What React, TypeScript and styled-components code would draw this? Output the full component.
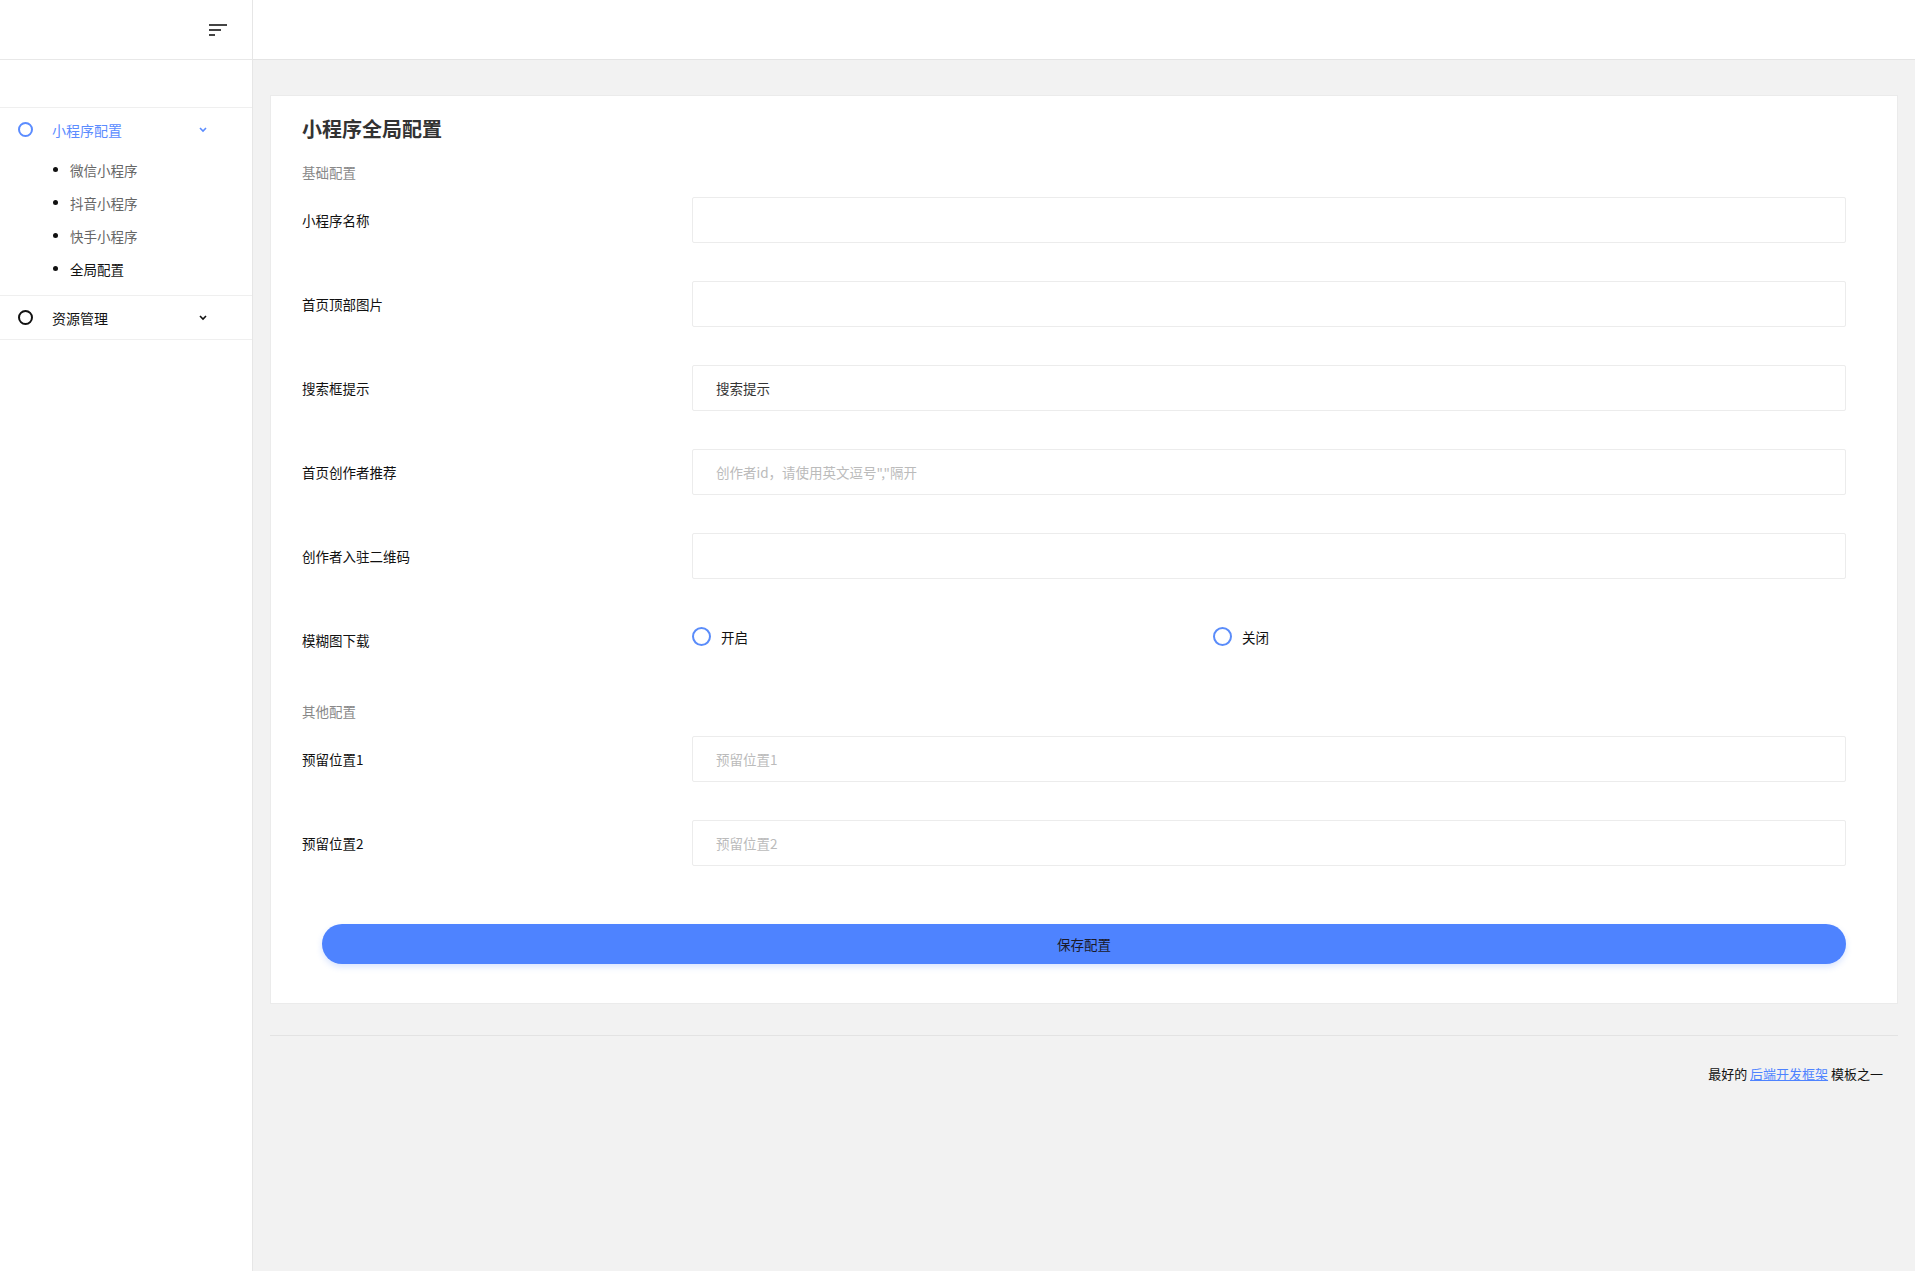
import React from 'react'
import styled, { createGlobalStyle } from 'styled-components'

const GlobalStyle = createGlobalStyle`
    html, body {
        margin: 0;
        padding: 0;
        background: #f2f2f2;
        font-family: "Noto Sans CJK SC", "Noto Sans", "Liberation Sans", sans-serif;
        color: #222;
    }
    * { box-sizing: border-box; }
`

const Page = styled.div`
    display: flex;
    min-height: 100vh;
`

// ---- sidebar ----
const Sidebar = styled.aside`
    width: 253px;
    flex-shrink: 0;
    background: #fff;
    border-right: 1px solid #e6e6e6;
`
const SideTop = styled.div`
    height: 60px;
    display: flex;
    align-items: center;
    justify-content: flex-end;
    padding-right: 25px;
    border-bottom: 1px solid #e8e8e8;
`
const SideSpacer = styled.div`
    height: 48px;
    border-bottom: 1px solid #efefef;
`
const MenuGroup = styled.div`
    border-bottom: 1px solid #efefef;
`
const MenuHead = styled.div<{ $active?: boolean }>`
    height: 43px;
    display: flex;
    align-items: center;
    padding: 0 44px 0 18px;
    font-size: 14px;
    color: ${(p) => (p.$active ? '#5b8cff' : '#111')};
    cursor: pointer;
`
const MenuCircle = styled.span<{ $active?: boolean }>`
    width: 15px;
    height: 15px;
    border-radius: 50%;
    border: 2px solid ${(p) => (p.$active ? '#5b8cff' : '#111')};
    margin-right: 19px;
`
const MenuTitle = styled.span`
    flex: 1;
`
const SubMenu = styled.ul`
    list-style: none;
    margin: 0;
    padding: 2px 0 10px;
`
const SubItem = styled.li<{ $current?: boolean }>`
    height: 33px;
    display: flex;
    align-items: center;
    padding-left: 53px;
    font-size: 13.5px;
    color: ${(p) => (p.$current ? '#111' : '#666')};
    &::before {
        content: '';
        width: 5px;
        height: 5px;
        border-radius: 50%;
        background: #111;
        margin-right: 12px;
    }
`

const Chevron = ({ color }: { color: string }) => (
    <svg width='10' height='7' viewBox='0 0 10 7'>
        <path d='M2 2 L5 5 L8 2' fill='none' stroke={color} strokeWidth='1.6' />
    </svg>
)

const MenuIcon = () => (
    <svg width='18' height='14' viewBox='0 0 18 14'>
        <rect x='0' y='1' width='18' height='2' fill='#444' />
        <rect x='0' y='6' width='12' height='2' fill='#444' />
        <rect x='0' y='11' width='6' height='2' fill='#444' />
    </svg>
)

// ---- main ----
const Main = styled.main`
    flex: 1;
    display: flex;
    flex-direction: column;
`
const TopBar = styled.header`
    height: 60px;
    background: #fff;
    border-bottom: 1px solid #e4e4e4;
`
const Content = styled.div`
    padding: 35px 17px 0;
`
const Card = styled.section`
    background: #fff;
    border: 1px solid #ebebeb;
    padding: 19px 51px 39px 31px;
`
const Title = styled.h1`
    margin: 0;
    font-size: 20px;
    line-height: 28px;
    font-weight: 700;
    color: #333;
`
const Section = styled.div<{ $first?: boolean }>`
    font-size: 13.5px;
    line-height: 20px;
    color: #888;
    margin: ${(p) => (p.$first ? '19px' : '0')} 0 15px;
`
const Row = styled.div`
    display: flex;
    align-items: center;
    height: 46px;
    margin-bottom: 38px;
`
const Label = styled.label`
    width: 390px;
    flex-shrink: 0;
    font-size: 13.5px;
    color: #111;
`
const Input = styled.input`
    flex: 1;
    height: 46px;
    border: 1px solid #ececec;
    border-radius: 2px;
    padding: 0 23px;
    font-family: inherit;
    font-size: 13.5px;
    color: #333;
    outline: none;
    &::placeholder {
        color: #bbb;
    }
`
const RadioGroup = styled.div`
    flex: 1;
    display: flex;
    margin-top: -7px;
`
const RadioOption = styled.label`
    width: 521px;
    display: flex;
    align-items: center;
    font-size: 13.5px;
    color: #111;
    cursor: pointer;
`
const RadioCircle = styled.span`
    width: 19px;
    height: 19px;
    border-radius: 50%;
    border: 2px solid #5a8cfa;
    margin-right: 10px;
`
const SaveButton = styled.button`
    display: block;
    width: calc(100% - 20px);
    margin: 58px 0 0 20px;
    height: 40px;
    border: none;
    border-radius: 20px;
    background: #4e83ff;
    color: #1a1a2a;
    font-family: inherit;
    font-size: 13.5px;
    box-shadow: 0 3px 6px rgba(78, 131, 255, 0.22);
    cursor: pointer;
`
const Footer = styled.footer`
    margin: 31px 17px 0;
    border-top: 1px solid #e3e3e3;
    padding: 28px 15px 0 0;
    text-align: right;
    font-size: 13px;
    line-height: 20px;
    color: #111;
    a {
        color: #4e83ff;
        text-decoration: underline;
    }
`

type Field = { label: string; value?: string; placeholder?: string }

const basicFields: Field[] = [
    { label: '小程序名称' },
    { label: '首页顶部图片' },
    { label: '搜索框提示', value: '搜索提示' },
    { label: '首页创作者推荐', placeholder: '创作者id，请使用英文逗号","隔开' },
    { label: '创作者入驻二维码' },
]

const otherFields: Field[] = [
    { label: '预留位置1', placeholder: '预留位置1' },
    { label: '预留位置2', placeholder: '预留位置2' },
]

const FormRow = ({ field }: { field: Field }) => (
    <Row>
        <Label>{field.label}</Label>
        <Input defaultValue={field.value} placeholder={field.placeholder} />
    </Row>
)

export default function App() {
    return (
        <Page>
            <GlobalStyle />
            <Sidebar>
                <SideTop>
                    <MenuIcon />
                </SideTop>
                <SideSpacer />
                <MenuGroup>
                    <MenuHead $active>
                        <MenuCircle $active />
                        <MenuTitle>小程序配置</MenuTitle>
                        <Chevron color='#5b8cff' />
                    </MenuHead>
                    <SubMenu>
                        {['微信小程序', '抖音小程序', '快手小程序'].map((item) => (
                            <SubItem key={item}>{item}</SubItem>
                        ))}
                        <SubItem $current>全局配置</SubItem>
                    </SubMenu>
                </MenuGroup>
                <MenuGroup>
                    <MenuHead>
                        <MenuCircle />
                        <MenuTitle>资源管理</MenuTitle>
                        <Chevron color='#111' />
                    </MenuHead>
                </MenuGroup>
            </Sidebar>
            <Main>
                <TopBar />
                <Content>
                    <Card>
                        <Title>小程序全局配置</Title>
                        <Section $first>基础配置</Section>
                        {basicFields.map((f) => (
                            <FormRow key={f.label} field={f} />
                        ))}
                        <Row>
                            <Label>模糊图下载</Label>
                            <RadioGroup>
                                <RadioOption>
                                    <RadioCircle />
                                    开启
                                </RadioOption>
                                <RadioOption>
                                    <RadioCircle />
                                    关闭
                                </RadioOption>
                            </RadioGroup>
                        </Row>
                        <Section>其他配置</Section>
                        {otherFields.map((f) => (
                            <FormRow key={f.label} field={f} />
                        ))}
                        <SaveButton>保存配置</SaveButton>
                    </Card>
                </Content>
                <Footer>
                    最好的 <a href='#'>后端开发框架</a> 模板之一
                </Footer>
            </Main>
        </Page>
    )
}
